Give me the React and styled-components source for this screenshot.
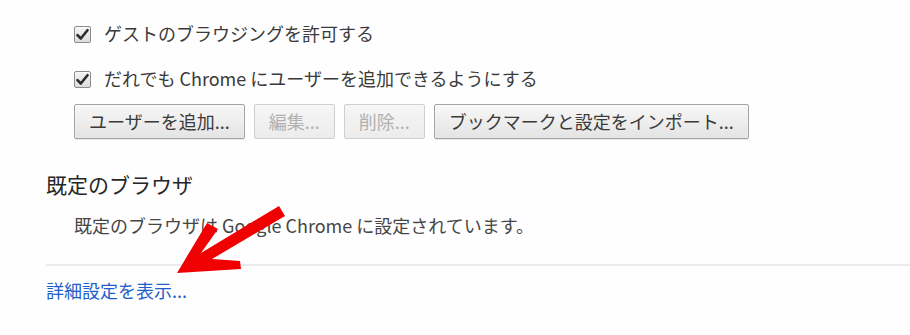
import styled, { createGlobalStyle } from 'styled-components';

const GlobalStyle = createGlobalStyle`
  html, body {
    margin: 0;
    padding: 0;
    background: #fefefe;
  }
  body {
    font-family: 'Noto Sans CJK JP', 'Noto Sans', sans-serif;
    color: #333;
  }
`;

const Page = styled.div`
  position: relative;
  width: 910px;
  height: 335px;
  overflow: hidden;
  padding: 21px 0 0 46px;
  box-sizing: border-box;
`;

const Indent = styled.div`
  margin-left: 28px;
`;

const CheckRow = styled.label`
  display: flex;
  align-items: center;
  gap: 13px;
  height: 24px;
  font-size: 18px;
  line-height: 24px;
  color: #3a3a3a;
  margin-bottom: ${p => p.$gap || 0}px;
`;

const Box = styled.span`
  display: flex;
  align-items: center;
  justify-content: center;
  width: 15px;
  height: 15px;
  margin-top: 3px;
  border: 1px solid #8c8c8c;
  border-radius: 2px;
  background: linear-gradient(#f4f4f4, #dcdcdc);
  box-shadow: inset 0 1px 1px rgba(255, 255, 255, 0.7);
`;

const ButtonRow = styled.div`
  display: flex;
  gap: 9px;
  margin-top: 14px;
`;

const Button = styled.button`
  height: 35px;
  padding: 0 14px;
  font-family: 'Noto Sans CJK JP', 'Noto Sans', sans-serif;
  font-size: 18px;
  line-height: 33px;
  color: ${p => (p.disabled ? '#b0b0b0' : '#3a3a3a')};
  background: ${p =>
    p.disabled ? 'linear-gradient(#f6f6f6, #ececec)' : 'linear-gradient(#f7f7f7, #e4e4e4)'};
  border: 1px solid ${p => (p.disabled ? '#cfcfcf' : '#a3a3a3')};
  border-radius: 2px;
  box-shadow: ${p =>
    p.disabled
      ? 'none'
      : '0 1px 0 rgba(0, 0, 0, 0.08), inset 0 1px 2px rgba(255, 255, 255, 0.75)'};
`;

const Heading = styled.h3`
  margin: 31px 0 0;
  font-size: 21px;
  font-weight: 400;
  line-height: 28px;
  color: #262626;
`;

const Description = styled.p`
  margin: 15px 0 0 28px;
  font-size: 18px;
  line-height: 24px;
  color: #464646;
`;

const Separator = styled.hr`
  margin: 27px 0 0;
  border: none;
  height: 2px;
  background: #ebebeb;
`;

const Link = styled.a`
  display: block;
  margin-top: 12px;
  font-size: 18px;
  line-height: 24px;
  color: #1f5fcc;
  text-decoration: none;
`;

const Arrow = styled.svg`
  position: absolute;
  left: 0;
  top: 0;
  pointer-events: none;
`;

function Check() {
  return (
    <Box>
      <svg width="13" height="13" viewBox="0 0 13 13">
        <path
          d="M1.5 7.2 L4.8 10.5 L11.5 2.2"
          fill="none"
          stroke="#2b2b2b"
          strokeWidth="2.6"
          strokeLinecap="round"
          strokeLinejoin="round"
        />
      </svg>
    </Box>
  );
}

export default function App() {
  return (
    <>
      <GlobalStyle />
      <Page>
        <Indent>
          <CheckRow $gap={21}>
            <Check />
            ゲストのブラウジングを許可する
          </CheckRow>
          <CheckRow>
            <Check />
            だれでも Chrome にユーザーを追加できるようにする
          </CheckRow>
          <ButtonRow>
            <Button>ユーザーを追加...</Button>
            <Button disabled>編集...</Button>
            <Button disabled>削除...</Button>
            <Button>ブックマークと設定をインポート...</Button>
          </ButtonRow>
        </Indent>
        <Heading>既定のブラウザ</Heading>
        <Description>既定のブラウザは Google Chrome に設定されています。</Description>
        <Separator />
        <Link href="#">詳細設定を表示...</Link>
        <Arrow width="910" height="335" viewBox="0 0 910 335">
          <polygon
            points="177,273 207,223 218,229 201,253 279,206 285,216 212,259 240,261 241,269"
            fill="#f00000"
          />
        </Arrow>
      </Page>
    </>
  );
}
